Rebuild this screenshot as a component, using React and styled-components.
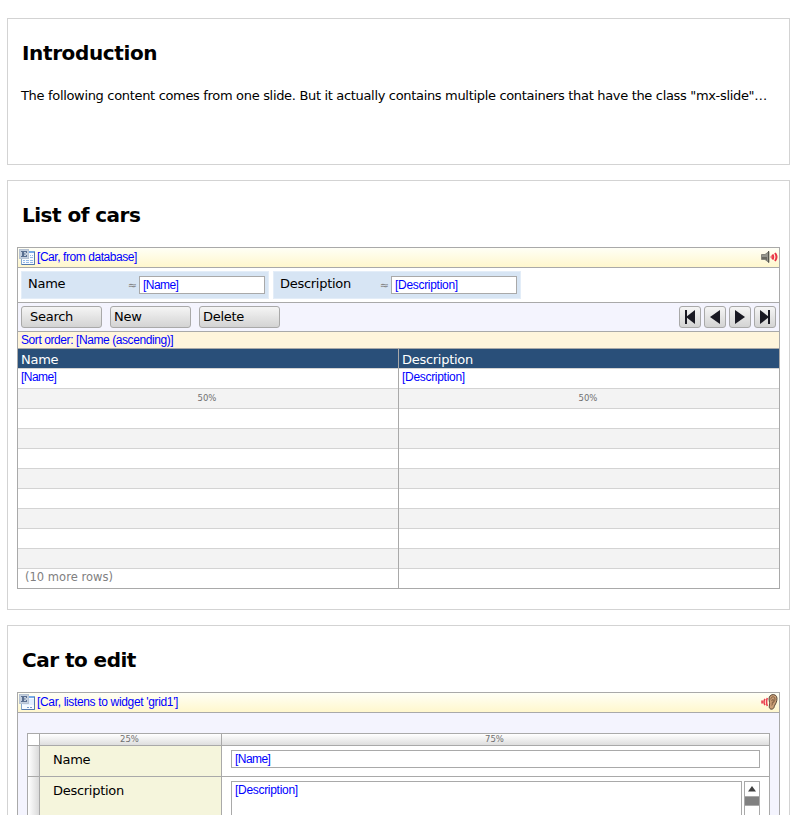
import React from "react";
import styled, { createGlobalStyle } from "styled-components";

const line = "#a9a9a9";
const softLine = "#d3d3d3";

const Global = createGlobalStyle`
  * { box-sizing: border-box; }
  body { margin: 0; background: #fff; overflow: hidden; }
`;

const Page = styled.main`
  height: 815px;
  overflow: hidden;
  padding: 18px 6px 0 7px;
  display: flex;
  flex-direction: column;
  gap: 15px;
  font-family: "DejaVu Sans", Verdana, sans-serif;
  font-size: 13px;
  color: #000;
`;

const Slide = styled.section`
  flex: none;
  height: ${(p) => p.$height}px;
  border: 1px solid ${softLine};
  padding: 0 9px;
`;

const Title = styled.h2`
  margin: 0;
  padding: 21px 0 0 5px;
  height: 66px;
  font-size: 20px;
  line-height: 26px;
  font-weight: 700;
  letter-spacing: ${(p) => p.$track ?? -0.52}px;
  white-space: nowrap;
`;

const Label = styled.span`
  font-size: 13px;
  line-height: 16px;
  letter-spacing: -0.28px;
  white-space: nowrap;
`;

const MoreRows = styled.span`
  font-size: 11.5px;
  line-height: 17px;
  letter-spacing: 0.02px;
  white-space: nowrap;
`;

const Intro = styled.p`
  margin: 0;
  padding-left: 4px;
  margin-top: 3px;
  line-height: 16px;
  letter-spacing: -0.325px;
  white-space: nowrap;
`;

const Binding = styled.span`
  font-family: "Liberation Sans", Arial, sans-serif;
  font-size: 12px;
  line-height: 14px;
  color: #0000ff;
  letter-spacing: ${(p) => p.$track ?? -0.3}px;
  white-space: nowrap;
`;

const Widget = styled.div`
  border: 1px solid ${line};
  background: ${(p) => p.$bg || "#fff"};
`;

const SourceBar = styled.div`
  height: 20px;
  border-bottom: 1px solid ${line};
  background: linear-gradient(#fffff6, #fff7cd);
  display: flex;
  align-items: flex-start;
  padding: 1px 1px 0;
  gap: 2px;
  ${Binding} { padding-top: 1px; }
  & > :last-child { margin-left: auto; }
`;

const SearchBar = styled.div`
  height: 35px;
  border-bottom: 1px solid ${line};
  padding: 3px;
  display: flex;
  gap: 4px;
`;

const SearchField = styled.div`
  width: 248px;
  height: 28px;
  background: #d7e5f4;
  border: 1px solid #e3edf8;
  display: flex;
  padding: 4px 3px 0 6px;
`;

const Approx = styled.span`
  margin-left: auto;
  padding-top: 1px;
  margin-right: 2px;
  font-size: 11px;
  line-height: 18px;
  color: #808080;
`;

const TextBox = styled.div`
  width: ${(p) => p.$width}px;
  height: ${(p) => p.$height || 18}px;
  border: 1px solid ${line};
  background: #fff;
  padding: 1px 3px;
  display: flex;
  flex: none;
`;

const Toolbar = styled.div`
  height: 29px;
  border-bottom: 1px solid ${line};
  background: #f4f4fe;
  padding: 3px;
  display: flex;
  gap: 8px;
`;

const Button = styled.div`
  width: 81px;
  height: 22px;
  border: 1px solid ${line};
  border-radius: 3px;
  background: linear-gradient(#f5f5f5, #d3d3d3);
  padding: 2px 0 0 ${(p) => p.$indent || 3}px;
  display: flex;
`;

const Pager = styled.div`
  margin-left: auto;
  display: flex;
  gap: 3px;
`;

const PagerButton = styled(Button)`
  width: 22px;
  padding: 0;
  align-items: center;
  justify-content: center;
`;

const SortBar = styled.div`
  height: 17px;
  border-bottom: 1px solid ${line};
  background: #fff5dc;
  padding: 1px 3px;
  display: flex;
`;

const Columns = styled.div`
  display: grid;
  grid-template-columns: 381px 380px;
`;

const Column = styled.div`
  &:first-child { border-right: 1px solid ${line}; }
`;

const Cell = styled.div`
  height: ${(p) => (p.$last ? 19 : 20)}px;
  border-bottom: ${(p) => (p.$last ? "0" : `1px solid ${softLine}`)};
  background: ${(p) => (p.$head ? "#294f79" : p.$alt ? "#f3f3f3" : "#fff")};
  color: ${(p) => (p.$head ? "#fff" : p.$last ? "#808080" : "#000")};
  padding: ${(p) => (p.$last ? "0 7px" : p.$head ? "3px 3px" : "1px 3px")};
  display: flex;
  justify-content: ${(p) => (p.$center ? "center" : "flex-start")};
`;

const Percent = styled.span`
  font-size: 8.5px;
  line-height: ${(p) => p.$lh || 17}px;
  margin-right: 2px;
  color: #707070;
`;

const FormTable = styled.div`
  margin: 20px 9px 0;
  border: 1px solid ${line};
  display: grid;
  grid-template-columns: 12px 182px 1fr;
  grid-template-rows: 12px 31px 60px;
  background: #fff;
`;

const TableCell = styled.div`
  border-bottom: 1px solid ${line};
  border-right: ${(p) => (p.$end ? "0" : `1px solid ${line}`)};
  background: ${(p) =>
    ({
      ruler: "linear-gradient(#fff, #dedede)",
      side: "linear-gradient(90deg, #fff, #dadada)",
      label: "#f5f5dc",
    })[p.$kind] || "#fff"};
  padding: ${(p) => (p.$kind === "label" ? "6px 13px" : p.$kind === "field" ? "4px 9px" : "0")};
  display: flex;
  gap: 2px;
  justify-content: ${(p) => (p.$kind === "ruler" ? "center" : "flex-start")};
`;

const ScrollBar = styled.div`
  width: 16px;
  height: 56px;
  border: 1px solid ${line};
  background: #fff;
  display: flex;
  flex-direction: column;
`;

const ScrollArrow = styled.div`
  height: 15px;
  border-bottom: 1px solid ${line};
  display: flex;
  justify-content: center;
  padding-top: 4px;
`;

const Thumb = styled.div`
  height: 9px;
  background: #808080;
  border-bottom: 1px solid ${line};
`;

const Icon = styled.svg`
  display: block;
  flex: none;
`;

function EntityIcon({ grid }) {
  return (
    <Icon width="16" height="16" viewBox="0 0 16 16">
      <rect x="2.5" y="2.5" width="13" height="13" fill="#f7fbff" stroke="#83a5cf" />
      <path d="M15.5 3v12.500H3" fill="none" stroke="#5479ac" />
      <rect x="9" y="2" width="6" height="2" fill="#78aae8" />
      {grid ? (
        <g fill="#93b9e8">
          <rect x="11" y="6" width="1" height="1" />
          <rect x="13" y="6" width="1" height="1" />
          <rect x="11" y="8" width="3" height="1" />
          <rect x="4" y="11" width="2" height="1" />
          <rect x="7" y="11" width="3" height="1" />
          <rect x="11" y="11" width="3" height="1" />
          <rect x="4" y="13" width="2" height="1" />
          <rect x="7" y="13" width="3" height="1" />
          <rect x="11" y="13" width="3" height="1" />
        </g>
      ) : (
        <g>
          <rect x="4" y="5" width="11" height="6" fill="#e2efff" />
          <path d="M8 13.500h2M11 13.500h2" stroke="#789bcb" />
        </g>
      )}
      <rect x="0.5" y="0.5" width="9" height="9" fill="#c5d0df" stroke="#b7c3d3" />
      <path d="M2 2h6v2H7V3H5v1.500h1.500v1H5V7h2V6h1v2H2V7h1V3H2z" fill="#5a6f90" />
    </Icon>
  );
}

function SpeakerIcon() {
  return (
    <Icon width="17" height="16" viewBox="0 0 17 16">
      <path d="M.5 5.500H4l4-3v11l-4-3H.5z" fill="#96968e" stroke="#74746c" strokeWidth=".8" />
      <path d="M1 8h5v3.500L4 10H1z" fill="#6a6a62" />
      <path d="M7.500 2v11.500" stroke="#55554d" />
      <path d="M9 8l2.500-2.500v5z" fill="#f0747c" />
      <path d="M11.500 5.500q1.500 2.500 0 5M14 4q3 4 0 8" fill="none" stroke="#ea3344" strokeWidth="2" />
    </Icon>
  );
}

function EarIcon() {
  return (
    <Icon width="17" height="16" viewBox="0 0 17 16">
      <path d="M1.500 6.500q-1 1.500 0 3M4 4.800q-2 3.200 0 6.400M6.300 4q-1.500 4 0 8" fill="none" stroke="#ea3d4d" strokeWidth="1.600" />
      <path d="M8 5C8 2 10 .5 12.500.6c3 .2 4 2.900 3.300 5.900-.5 3-2 4-2.500 6-.5 3.400-4.500 3.400-5 .9C8 11.500 9 10.500 8.500 8.500z" fill="#cba077" stroke="#4a3a2e" strokeWidth=".9" />
      <path d="M9.800 5.500c0-3.300 4.200-3.700 4.200-.5 0 3-2.700 3.500-3.200 6.500M10.300 6.800l1.900-1.500q1 2-1.500 4" fill="none" stroke="#7a5a40" strokeWidth=".9" />
    </Icon>
  );
}

function PagerIcon({ kind }) {
  const flip = kind === "next" || kind === "last";
  const bar = kind === "first" || kind === "last";
  return (
    <Icon width="16" height="16" viewBox="0 0 16 16">
      <g transform={flip ? "matrix(-1 0 0 1 16 0)" : undefined} fill="#191923">
        <path d={bar ? "M4 8l9-7v14z" : "M3 8l10-7v14z"} />
        {bar && <rect x="3" y="1" width="2" height="14" />}
      </g>
    </Icon>
  );
}

const buttons = [
  { text: "Search", indent: 8 },
  { text: "New", indent: 3 },
  { text: "Delete", indent: 3 },
];

const columns = [
  { name: "Name", binding: "[Name]", track: -0.55 },
  { name: "Description", binding: "[Description]", track: -0.3 },
];

const emptyRows = [0, 1, 2, 3, 4, 5, 6, 7];

export default function App() {
  return (
    <>
      <Global />
      <Page>
        <Slide $height={147}>
          <Title $track={-0.37}>Introduction</Title>
          <Intro>
            The following content comes from one slide. But it actually contains multiple containers that have the class "mx-slide"…
          </Intro>
        </Slide>

        <Slide $height={430}>
          <Title>List of cars</Title>
          <Widget>
            <SourceBar>
              <EntityIcon grid />
              <Binding $track={-0.44}>[Car, from database]</Binding>
              <SpeakerIcon />
            </SourceBar>
            <SearchBar>
              {columns.map((c) => (
                <SearchField key={c.name}>
                  <Label>{c.name}</Label>
                  <Approx>≈</Approx>
                  <TextBox $width={126}>
                    <Binding $track={c.track}>{c.binding}</Binding>
                  </TextBox>
                </SearchField>
              ))}
            </SearchBar>
            <Toolbar>
              {buttons.map((b) => (
                <Button key={b.text} $indent={b.indent}>
                  <Label>{b.text}</Label>
                </Button>
              ))}
              <Pager>
                {["first", "previous", "next", "last"].map((k) => (
                  <PagerButton key={k}>
                    <PagerIcon kind={k} />
                  </PagerButton>
                ))}
              </Pager>
            </Toolbar>
            <SortBar>
              <Binding $track={-0.42}>Sort order: [Name (ascending)]</Binding>
            </SortBar>
            <Columns>
              {columns.map((c, i) => (
                <Column key={c.name}>
                  <Cell $head>
                    <Label>{c.name}</Label>
                  </Cell>
                  <Cell>
                    <Binding $track={c.track}>{c.binding}</Binding>
                  </Cell>
                  <Cell $alt $center>
                    <Percent>50%</Percent>
                  </Cell>
                  {emptyRows.map((r) => (
                    <Cell key={r} $alt={r % 2 === 1} />
                  ))}
                  <Cell $last>{i === 0 && <MoreRows>(10 more rows)</MoreRows>}</Cell>
                </Column>
              ))}
            </Columns>
          </Widget>
        </Slide>

        <Slide $height={260}>
          <Title>Car to edit</Title>
          <Widget $bg="#f4f4fe">
            <SourceBar>
              <EntityIcon />
              <Binding $track={-0.34}>[Car, listens to widget 'grid1']</Binding>
              <EarIcon />
            </SourceBar>
            <FormTable>
              <TableCell />
              <TableCell $kind="ruler">
                <Percent $lh={11}>25%</Percent>
              </TableCell>
              <TableCell $kind="ruler" $end>
                <Percent $lh={11}>75%</Percent>
              </TableCell>
              <TableCell $kind="side" />
              <TableCell $kind="label">
                <Label>Name</Label>
              </TableCell>
              <TableCell $kind="field" $end>
                <TextBox $width={529}>
                  <Binding $track={-0.55}>[Name]</Binding>
                </TextBox>
              </TableCell>
              <TableCell $kind="side" />
              <TableCell $kind="label">
                <Label>Description</Label>
              </TableCell>
              <TableCell $kind="field" $end>
                <TextBox $width={511} $height={56}>
                  <Binding>[Description]</Binding>
                </TextBox>
                <ScrollBar>
                  <ScrollArrow>
                    <Icon width="8" height="6" viewBox="0 0 8 6">
                      <path d="M4 0l4 5.500H0z" fill="#404040" />
                    </Icon>
                  </ScrollArrow>
                  <Thumb />
                </ScrollBar>
              </TableCell>
            </FormTable>
          </Widget>
        </Slide>
      </Page>
    </>
  );
}
